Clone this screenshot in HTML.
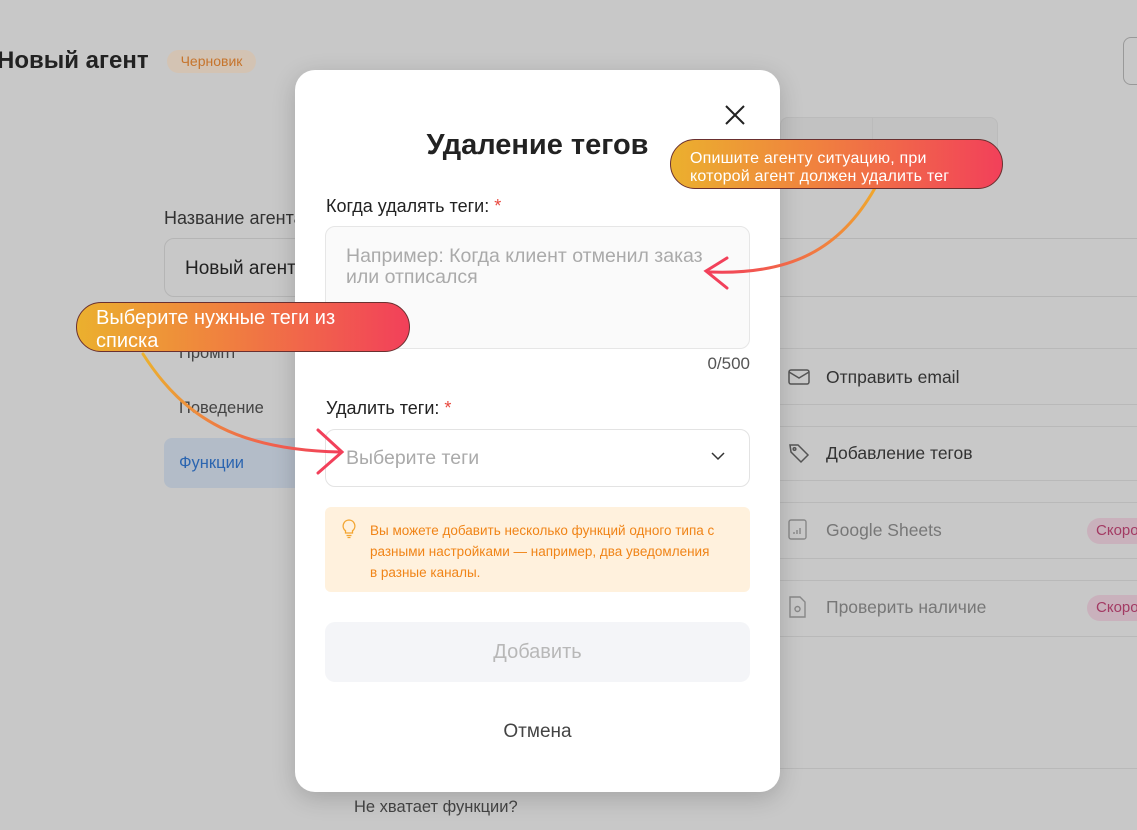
<!DOCTYPE html>
<html><head><meta charset="utf-8"><style>
*{box-sizing:border-box;margin:0;padding:0}
body{width:1137px;height:830px;overflow:hidden;background:#c8c8c8;font-family:"Liberation Sans",sans-serif;position:relative;color:#222}
.a{position:absolute}
.line{position:absolute;left:780px;right:0;height:1px;background:#b9b9b9}
.row{position:absolute;left:826px;font-size:17.5px;color:#333}
.soon{position:absolute;left:1087px;width:80px;height:26px;border-radius:13px;background:#c9b1bc;color:#a33a63;font-size:15px;padding:4px 9px}
.modal{position:absolute;left:295px;top:70px;width:485px;height:722px;background:#fff;border-radius:20px;box-shadow:0 6px 24px rgba(0,0,0,.18)}
.lbl{position:absolute;left:31px;font-size:18px;color:#222}
.lbl b{color:#e8473d;font-weight:normal}
.pill{position:absolute;border-radius:26px;border:1px solid #6a3030;background:linear-gradient(90deg,#ebb02e,#f0803f 45%,#f2405a);color:#fff}
</style></head><body>
<div class="a" style="left:-3px;top:47px;font-size:24px;font-weight:bold;color:#222">Новый агент</div>
<div class="a" style="left:167px;top:50px;width:89px;height:23px;border-radius:12px;background:#d3c3b3;color:#c6742c;font-size:14px;text-align:center;line-height:23px">Черновик</div>
<div class="a" style="left:1123px;top:37px;width:30px;height:48px;border:1px solid #999;border-radius:8px"></div>
<div class="a" style="left:780px;top:117px;width:218px;height:40px;border:1px solid #bbb;border-radius:8px;background:#c2c2c2"></div>
<div class="a" style="left:872px;top:117px;width:1px;height:40px;background:#bbb"></div>
<div class="a" style="left:164px;top:208px;font-size:18px;color:#333">Название агента</div>
<div class="a" style="left:164px;top:238px;width:1000px;height:59px;border:1px solid #b5b5b5;border-radius:10px"></div>
<div class="a" style="left:185px;top:258px;font-size:19px;color:#222">Новый агент</div>
<div class="a" style="left:179px;top:344px;font-size:16.5px;color:#444">Промпт</div>
<div class="a" style="left:179px;top:399px;font-size:16.5px;color:#444">Поведение</div>
<div class="a" style="left:164px;top:438px;width:140px;height:50px;border-radius:8px;background:#b3bcc8"></div>
<div class="a" style="left:179px;top:454px;font-size:16.5px;color:#2b65b0">Функции</div>
<div class="line" style="top:348px"></div><div class="line" style="top:404px"></div>
<div class="line" style="top:426px"></div><div class="line" style="top:480px"></div>
<div class="line" style="top:502px"></div><div class="line" style="top:558px"></div>
<div class="line" style="top:580px"></div><div class="line" style="top:636px"></div>
<div class="line" style="top:768px"></div>
<svg class="a" style="left:787px;top:365px" width="24" height="24" viewBox="0 0 24 24" fill="none" stroke="#555" stroke-width="1.5"><rect x="2" y="5" width="20" height="14" rx="2"/><path d="M2 7l10 6 10-6"/></svg>
<div class="row" style="top:367px">Отправить email</div>
<svg class="a" style="left:787px;top:441px" width="24" height="24" viewBox="0 0 24 24" fill="none" stroke="#555" stroke-width="1.5"><path d="M3 4h8l10 10-7 7L4 11z"/><circle cx="7.5" cy="8" r="1.3"/></svg>
<div class="row" style="top:443px">Добавление тегов</div>
<svg class="a" style="left:788px;top:519px" width="20" height="22" viewBox="0 0 20 22" fill="none" stroke="#888" stroke-width="1.4"><rect x="1" y="1" width="17" height="19" rx="2"/><path d="M6 15v-2M9 15v-4M12 15v-6"/></svg>
<div class="row" style="top:520px;color:#777">Google Sheets</div>
<div class="soon" style="top:518px">Скоро</div>
<svg class="a" style="left:788px;top:596px" width="20" height="22" viewBox="0 0 20 22" fill="none" stroke="#888" stroke-width="1.4"><path d="M2 1h10l5 5v15H2z"/><circle cx="9.5" cy="13" r="2.5"/></svg>
<div class="row" style="top:597px;color:#777">Проверить наличие</div>
<div class="soon" style="top:595px">Скоро</div>
<div class="a" style="left:354px;top:798px;font-size:16.5px;color:#444">Не хватает функции?</div>

<div class="modal">
<svg class="a" style="left:429px;top:34px" width="22" height="22" viewBox="0 0 22 22" stroke="#222" stroke-width="2"><path d="M2 2l18 18M20 2L2 20"/></svg>
<div class="a" style="left:0;width:485px;top:59px;text-align:center;font-size:29px;font-weight:bold;color:#222">Удаление тегов</div>
<div class="lbl" style="top:126px">Когда удалять теги: <b>*</b></div>
<div class="a" style="left:30px;top:156px;width:425px;height:123px;background:#fafafa;border:1px solid #e6e6e6;border-radius:10px"></div>
<div class="a" style="left:51px;top:176px;font-size:19.5px;color:#aaa;line-height:21px;white-space:nowrap">Например: Когда клиент отменил заказ<br>или отписался</div>
<div class="a" style="right:30px;top:284px;font-size:17px;color:#555">0/500</div>
<div class="lbl" style="top:328px">Удалить теги: <b>*</b></div>
<div class="a" style="left:30px;top:359px;width:425px;height:58px;background:#fff;border:1px solid #e3e3e3;border-radius:10px"></div>
<div class="a" style="left:51px;top:377px;font-size:19.5px;color:#aaa">Выберите теги</div>
<svg class="a" style="left:416px;top:381px" width="14" height="10" viewBox="0 0 14 10" fill="none" stroke="#333" stroke-width="1.5"><path d="M1 2l6 6 6-6"/></svg>
<div class="a" style="left:30px;top:437px;width:425px;height:85px;background:#fff1dd;border-radius:6px"></div>
<svg class="a" style="left:47px;top:449px" width="14" height="20" viewBox="0 0 14 20" fill="none" stroke="#f3a530" stroke-width="1.3"><path d="M7 1a6 6 0 0 0-3.5 10.8V14h7v-2.2A6 6 0 0 0 7 1zM4.5 16.5h5M5.5 18.5h3"/></svg>
<div class="a" style="left:75px;top:450px;width:350px;font-size:13.5px;line-height:21px;color:#f08417">Вы можете добавить несколько функций одного типа с разными настройками — например, два уведомления в разные каналы.</div>
<div class="a" style="left:30px;top:552px;width:425px;height:60px;background:#f4f5f8;border-radius:10px;text-align:center;line-height:60px;font-size:20px;color:#b8b8b8">Добавить</div>
<div class="a" style="left:0;width:485px;top:651px;text-align:center;font-size:19px;color:#444">Отмена</div>
</div>

<svg class="a" style="left:0;top:0" width="1137" height="830" fill="none" stroke-linecap="round">
<defs>
<linearGradient id="g1" x1="870" y1="190" x2="710" y2="270" gradientUnits="userSpaceOnUse"><stop offset="0" stop-color="#f0a52e"/><stop offset="1" stop-color="#f2405a"/></linearGradient>
<linearGradient id="g2" x1="145" y1="355" x2="340" y2="450" gradientUnits="userSpaceOnUse"><stop offset="0" stop-color="#ebb02e"/><stop offset="1" stop-color="#f2405a"/></linearGradient>
</defs>
<path d="M875 188C840 250 790 275 710 272" stroke="url(#g1)" stroke-width="3"/>
<path d="M727 258L706 271 727 288" stroke="#f2405a" stroke-width="3"/>
<path d="M143 354C185 420 240 450 340 452" stroke="url(#g2)" stroke-width="3"/>
<path d="M318 430L342 452 318 473" stroke="#f2405a" stroke-width="3"/>
</svg>
<div class="pill" style="left:670px;top:139px;width:333px;height:50px;padding:10px 0 0 19px;font-size:16px;line-height:18px;letter-spacing:.2px">Опишите агенту ситуацию, при<br>которой агент должен удалить тег</div>
<div class="pill" style="left:76px;top:302px;width:334px;height:50px;padding:4px 0 0 19px;font-size:20px;line-height:23px">Выберите нужные теги из<br>списка</div>
</body></html>
